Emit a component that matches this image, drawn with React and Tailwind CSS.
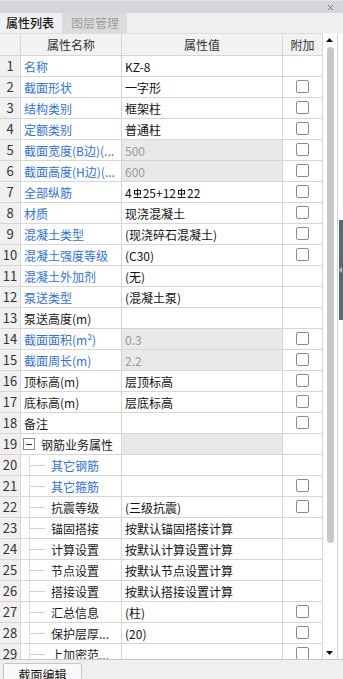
import React from "react";

// 钢筋符号 (HRB400)
const Rebar = () => (
  <svg
    width="9"
    height="10"
    viewBox="0 0 9 10"
    className="inline-block mx-[1px] -mt-[3px] align-middle"
    fill="none"
    stroke="currentColor"
    strokeWidth="1"
  >
    <rect x="1.5" y="2.5" width="6" height="3.5" />
    <path d="M4.5 0.5V8.5M0.5 9.5H8.5" />
  </svg>
);

const rows = [
  { name: "名称", value: "KZ-8", blue: true },
  { name: "截面形状", value: "一字形", blue: true, box: true },
  { name: "结构类别", value: "框架柱", blue: true, box: true },
  { name: "定额类别", value: "普通柱", blue: true, box: true },
  { name: "截面宽度(B边)(...", value: "500", blue: true, gray: true, box: true },
  { name: "截面高度(H边)(...", value: "600", blue: true, gray: true, box: true },
  {
    name: "全部纵筋",
    value: (
      <>
        4<Rebar />25+12<Rebar />22
      </>
    ),
    blue: true,
    box: true,
  },
  { name: "材质", value: "现浇混凝土", blue: true, box: true },
  { name: "混凝土类型", value: "(现浇碎石混凝土)", blue: true, box: true },
  { name: "混凝土强度等级", value: "(C30)", blue: true, box: true },
  { name: "混凝土外加剂", value: "(无)", blue: true },
  { name: "泵送类型", value: "(混凝土泵)", blue: true },
  { name: "泵送高度(m)", value: "" },
  { name: "截面面积(m²)", value: "0.3", blue: true, gray: true, box: true },
  { name: "截面周长(m)", value: "2.2", blue: true, gray: true, box: true },
  { name: "顶标高(m)", value: "层顶标高", box: true },
  { name: "底标高(m)", value: "层底标高", box: true },
  { name: "备注", value: "", box: true },
  { name: "钢筋业务属性", value: "", group: true, gray: true },
  { name: "其它钢筋", value: "", blue: true, child: true },
  { name: "其它箍筋", value: "", blue: true, child: true, box: true },
  { name: "抗震等级", value: "(三级抗震)", child: true, box: true },
  { name: "锚固搭接", value: "按默认锚固搭接计算", child: true },
  { name: "计算设置", value: "按默认计算设置计算", child: true },
  { name: "节点设置", value: "按默认节点设置计算", child: true },
  { name: "搭接设置", value: "按默认搭接设置计算", child: true },
  { name: "汇总信息", value: "(柱)", child: true, box: true },
  { name: "保护层厚...", value: "(20)", child: true, box: true },
  { name: "上加密范...", value: "", child: true, box: true },
];

const Checkbox = () => (
  <div className="w-[13px] h-[13px] mt-[2px] rounded-[2px] border border-[#8a8a8a] bg-white" />
);

const Row = ({ n, row }) => (
  <div className="flex h-[21px] shrink-0 text-[12px] leading-[14px]">
    <div className="w-[21px] shrink-0 flex items-center justify-center bg-[#f0f0f0] border-r border-b border-[#d6d6d6] text-[13px] text-[#333]">
      {n}
    </div>
    <div
      className={`w-[101px] shrink-0 flex items-center border-r border-b border-[#d6d6d6] whitespace-nowrap overflow-hidden ${
        row.blue ? "text-[#3070e8]" : "text-[#1a1a1a]"
      } ${row.child ? "" : row.group ? "pl-[2px]" : "pl-[3px]"}`}
    >
      {row.group && (
        <div className="w-[12px] h-[12px] mr-[6px] border border-[#8a8a8a] bg-white flex items-center justify-center">
          <div className="w-[6px] h-px bg-[#333]" />
        </div>
      )}
      {row.child && (
        <div className="ml-[8px] mr-[6px] w-[16px] self-stretch flex items-center border-l border-[#dedede]">
          <div className="w-full h-px bg-[#cfcfcf]" />
        </div>
      )}
      <span className="pt-[1px]">{row.name}</span>
    </div>
    <div
      className={`w-[161px] shrink-0 flex items-center pl-[3px] border-r border-b border-[#d6d6d6] whitespace-nowrap overflow-hidden ${
        row.gray ? "bg-[#e9e9e9]" : "bg-white"
      } ${row.gray && !row.group ? "text-[#9a9a9a]" : "text-[#111]"}`}
    >
      <span className="pt-[1px]">{row.value}</span>
    </div>
    <div className="w-[40px] shrink-0 flex items-start justify-center pt-[1px] border-r border-b border-[#d6d6d6]">
      {row.box && <Checkbox />}
    </div>
  </div>
);

export default function App() {
  return (
    <div className="w-[343px] h-[679px] overflow-hidden bg-white flex flex-col font-['Noto_Sans_CJK_SC',sans-serif]">
      {/* 标题栏 */}
      <div className="h-[13px] shrink-0 bg-[#d5d5da] border-t border-[#e6e6ea] flex justify-end items-center pr-[10px]">
        <svg width="5" height="5" viewBox="0 0 5 5" stroke="#7a7a7a" strokeWidth="1">
          <path d="M0 0L5 5M5 0L0 5" />
        </svg>
      </div>

      {/* 标签页 */}
      <div className="h-[20px] shrink-0 flex bg-[#f0f0f0] text-[12px] leading-[14px]">
        <div className="w-[62px] flex items-center pl-[6px] font-medium text-[#1a1a1a]">属性列表</div>
        <div className="w-[65px] flex items-center pl-[9px] bg-[#dcdcdc] text-[#a0a0a0]">图层管理</div>
      </div>

      {/* 表格区 */}
      <div className="flex-1 min-h-0 flex border-b border-[#c8c8c8]">
        <div className="w-[323px] shrink-0 flex flex-col overflow-hidden">
          <div className="flex h-[23px] shrink-0 bg-[#f2f2f2] text-[12px] leading-[14px] text-[#333] border-t border-[#dcdcdc]">
            <div className="w-[21px] border-r border-b border-[#d6d6d6]" />
            <div className="w-[101px] flex items-center justify-center border-r border-b border-[#d6d6d6]">属性名称</div>
            <div className="w-[161px] flex items-center justify-center border-r border-b border-[#d6d6d6]">属性值</div>
            <div className="w-[40px] flex items-center justify-center border-r border-b border-[#d6d6d6]">附加</div>
          </div>
          {rows.map((row, i) => (
            <Row key={i} n={i + 1} row={row} />
          ))}
        </div>

        {/* 滚动条 */}
        <div className="w-[15px] shrink-0 flex flex-col border-r border-[#cfcfcf] bg-white">
          <div className="h-[14px] flex items-center justify-center pr-[1px]">
            <svg width="7" height="4" viewBox="0 0 7 4">
              <polygon points="3.5,0 7,4 0,4" fill="#111" />
            </svg>
          </div>
          <div className="h-[496px] w-[7px] ml-[4px] rounded-full bg-[#c8c8c8]" />
          <div className="flex-1" />
          <div className="h-[12px] flex items-center justify-center pr-[1px]">
            <svg width="7" height="4" viewBox="0 0 7 4">
              <polygon points="0,0 7,0 3.5,4" fill="#111" />
            </svg>
          </div>
        </div>

        {/* 分隔条 */}
        <div className="w-[5px] shrink-0 flex flex-col pt-[187px] pl-[1px]">
          <div className="h-[100px] bg-[#5b6672] flex items-center justify-start">
            <svg width="3" height="6" viewBox="0 0 3 6">
              <polygon points="3,0 3,6 0,3" fill="#b8c0c8" />
            </svg>
          </div>
        </div>
      </div>

      {/* 底部标签 */}
      <div className="h-[19px] shrink-0 bg-[#efefef] pl-[3px] pt-[3px]">
        <div className="w-[79px] h-[20px] border border-[#c4c4c4] rounded-t-[2px] bg-[#fafafa] flex justify-center pt-[4px] text-[12px] leading-[14px] text-[#111]">
          截面编辑
        </div>
      </div>
    </div>
  );
}
